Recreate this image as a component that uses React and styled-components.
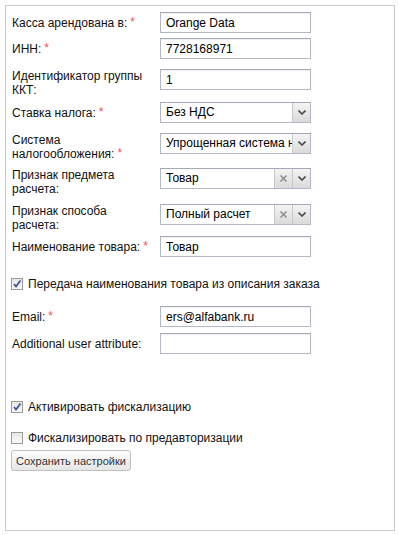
import styled, { createGlobalStyle } from "styled-components";

const Global = createGlobalStyle`
    body {
        margin: 0;
        background: #fff;
        font-family: "Liberation Sans", Arial, sans-serif;
        font-size: 12px;
        color: #000;
    }
`;

function Chevron() {
    return (
        <svg width="8" height="5" viewBox="0 0 8 5">
            <path d="M0.5 0.5 L4 4 L7.5 0.5" fill="none" stroke="#4a4a4a" strokeWidth="1.6" />
        </svg>
    );
}

function Cross() {
    return (
        <svg width="7" height="7" viewBox="0 0 7 7">
            <path d="M0.5 0.5 L6.5 6.5 M6.5 0.5 L0.5 6.5" stroke="#8c8c8c" strokeWidth="1.5" />
        </svg>
    );
}

function Check({ checked }) {
    return (
        <Box>
            {checked && (
                <svg width="10" height="10" viewBox="0 0 10 10">
                    <path d="M2 5 L4 7.5 L8.5 1.5" fill="none" stroke="#3e5795" strokeWidth="1.8" />
                </svg>
            )}
        </Box>
    );
}

function Field({ label, req, tall, mt, children }) {
    return (
        <Row $tall={tall} $mt={mt}>
            <Label>
                {label}
                {req && <Star>*</Star>}
            </Label>
            <Cell>{children}</Cell>
        </Row>
    );
}

function Select({ value, clear }) {
    return (
        <SelectBox>
            <SelectText>{value}</SelectText>
            {clear && <SelectBtn><Cross /></SelectBtn>}
            <SelectBtn><Chevron /></SelectBtn>
        </SelectBox>
    );
}

function App() {
    return (
        <>
            <Global />
            <Panel>
                <Field label="Касса арендована в:" req mt={1}>
                    <Input defaultValue="Orange Data" />
                </Field>
                <Field label="ИНН:" req mt={5}>
                    <Input defaultValue="7728168971" />
                </Field>
                <Field label={<>Идентификатор группы<br />ККТ:</>} tall mt={10}>
                    <Input defaultValue="1" />
                </Field>
                <Field label="Ставка налога:" req mt={5}>
                    <Select value="Без НДС" />
                </Field>
                <Field label={<>Система<br />налогообложения:</>} req tall mt={10}>
                    <Select value="Упрощенная система налогообложения" />
                </Field>
                <Field label={<>Признак предмета<br />расчета:</>} tall mt={7}>
                    <Select value="Товар" clear />
                </Field>
                <Field label={<>Признак способа<br />расчета:</>} tall mt={8}>
                    <Select value="Полный расчет" clear />
                </Field>
                <Field label="Наименование товара:" req mt={4}>
                    <Input defaultValue="Товар" />
                </Field>

                <CheckRow $mt={20}>
                    <Check checked />
                    <span>Передача наименования товара из описания заказа</span>
                </CheckRow>

                <Field label="Email:" req mt={15}>
                    <Input defaultValue="ers@alfabank.ru" />
                </Field>
                <Field label="Additional user attribute:" mt={6}>
                    <Input defaultValue="" />
                </Field>

                <CheckRow $mt={46}>
                    <Check checked />
                    <span>Активировать фискализацию</span>
                </CheckRow>
                <CheckRow $mt={17}>
                    <Check />
                    <span>Фискализировать по предавторизации</span>
                </CheckRow>
                <Button>Сохранить настройки</Button>
            </Panel>
        </>
    );
}

const Panel = styled.div`
    margin: 5px;
    width: 390px;
    height: 526px;
    box-sizing: border-box;
    border: 1px solid #cacaca;
    padding: 5px 0 0 5px;
`;

const Row = styled.div`
    display: flex;
    align-items: ${p => (p.$tall ? "flex-start" : "center")};
    margin-top: ${p => p.$mt}px;
`;

const Label = styled.div`
    width: 149px;
    padding-left: 1px;
    box-sizing: border-box;
    line-height: 14px;
    color: #111;
`;

const Star = styled.span`
    color: #f0505a;
    margin-left: 3px;
    position: relative;
    top: -1px;
`;

const Cell = styled.div`
    width: 151px;
`;

const Input = styled.input`
    display: block;
    width: 151px;
    height: 21px;
    box-sizing: border-box;
    border: 1px solid #b3b8c5;
    border-top-color: #a3a9b7;
    box-shadow: inset 0 1px 1px rgba(0, 0, 0, 0.06);
    padding: 0 5px;
    font-family: inherit;
    font-size: 12px;
    color: #000;
    outline: none;
`;

const SelectBox = styled.div`
    display: flex;
    width: 151px;
    height: 21px;
    box-sizing: border-box;
    border: 1px solid #b3b8c5;
    border-top-color: #a3a9b7;
    background: #fff;
`;

const SelectText = styled.div`
    flex: 1;
    overflow: hidden;
    white-space: nowrap;
    padding-left: 5px;
    line-height: 19px;
`;

const SelectBtn = styled.div`
    width: 17px;
    flex: none;
    display: flex;
    align-items: center;
    justify-content: center;
    border-left: 1px solid #c8c8c8;
    background: linear-gradient(#f4f4f4, #dadada);
`;

const CheckRow = styled.div`
    display: flex;
    align-items: center;
    gap: 5px;
    height: 14px;
    margin-top: ${p => p.$mt}px;
    color: #111;
`;

const Box = styled.span`
    width: 12px;
    height: 12px;
    box-sizing: border-box;
    border: 1px solid #9a9a9a;
    background: linear-gradient(#e6e6e6, #fafafa);
    display: flex;
    align-items: center;
    justify-content: center;
`;

const Button = styled.button`
    display: block;
    margin-top: 5px;
    width: 120px;
    height: 21px;
    padding: 0;
    white-space: nowrap;
    border: 1px solid #c0c0c0;
    border-radius: 3px;
    background: linear-gradient(#fdfdfd, #e6e6e6);
    font-family: inherit;
    font-size: 11px;
    color: #333;
`;

export default App;
